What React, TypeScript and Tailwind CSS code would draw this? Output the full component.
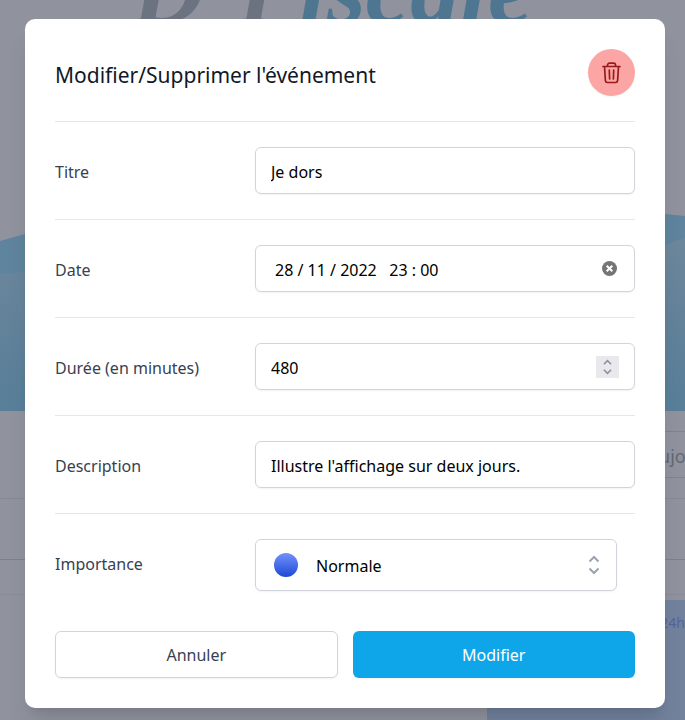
import React, { useState } from "react";

const field =
  "block h-[47px] w-full rounded-md border border-[#d1d5db] bg-white px-[15px] pt-[2px] text-[16px] text-black shadow-xs outline-none focus:border-sky-500";

function Row({ id, label, children }: { id: string; label: string; children: React.ReactNode }) {
  return (
    <div className="grid grid-cols-[200px_1fr] border-t border-[#e5e7eb] py-[25px]">
      <label htmlFor={id} className="self-start pt-[13px] text-[16px] leading-6 text-[#374151]">
        {label}
      </label>
      <div>{children}</div>
    </div>
  );
}

function Chevrons({ className }: { className: string }) {
  return (
    <svg className={className} viewBox="0 0 12 20" fill="none" stroke="currentColor" strokeWidth="2" aria-hidden="true">
      <path d="M1.5 6.5 6 2l4.5 4.5M1.5 13.5 6 18l4.5-4.5" />
    </svg>
  );
}

function Backdrop() {
  return (
    <div className="absolute inset-0 flex flex-col overflow-hidden bg-[#90939e]" aria-hidden="true">
      <div className="h-[212px] pr-5 text-center font-['Liberation_Serif',serif] text-[100px] font-bold italic leading-[1] text-[#6b7280]">
        <div className="-mt-[60px]">
          D’P<span className="text-[#4f7691]">iscale</span>
        </div>
      </div>
      <svg className="h-[199px] w-full shrink-0" viewBox="0 0 685 199" preserveAspectRatio="none">
        <defs>
          <linearGradient id="wave" x1="0" y1="0" x2="0" y2="1">
            <stop offset="0" stopColor="#6d879c" />
            <stop offset="0.9" stopColor="#5a7f99" />
          </linearGradient>
        </defs>
        <path d="M0 29 25 22C200-30 420-10 665 2L685 4V199H0Z" fill="#5f849d" />
        <path d="M0 62 25 60C250 42 450 120 665 33L685 26V199H0Z" fill="url(#wave)" />
      </svg>
      <div className="ml-[60px] h-[21px] shrink-0 border-b border-[#80838f]" />
      <div className="ml-[60px] flex h-[46px] shrink-0 items-center justify-end border-b border-[#80838f] pt-1 text-[18px] text-[#636875]">
        <span className="-mr-[60px]">Aujourd’hui</span>
      </div>
      <div className="h-[21px] shrink-0 border-b border-[#868994]" />
      <div className="h-[61px] shrink-0 border-b border-[#7e818c]" />
      <div className="h-[35px] shrink-0 border-b border-[#898c97]" />
      <div className="flex flex-1 justify-end">
        <div className="mt-[5px] w-[198px] bg-[#72829d] pt-3 text-right text-[14px] text-[#53659b]">24h</div>
      </div>
    </div>
  );
}

export default function App() {
  const [title, setTitle] = useState("Je dors");
  const [date, setDate] = useState("28 / 11 / 2022   23 : 00");
  const [duration, setDuration] = useState(480);
  const [description, setDescription] = useState("Illustre l'affichage sur deux jours.");

  return (
    <div className="relative min-h-screen overflow-hidden pt-[19px] pr-5 pb-3 pl-[25px] font-['Noto_Sans','Open_Sans',sans-serif]">
      <Backdrop />
      <form
        role="dialog"
        aria-labelledby="dialog-title"
        className="relative rounded-[10px] bg-white p-[30px] shadow-xl"
        onSubmit={(e) => e.preventDefault()}
      >
        <header className="mb-[25px] flex items-center justify-between">
          <h1 id="dialog-title" className="pt-1 text-[21px] leading-7 text-[#111827]">
            Modifier/Supprimer l'événement
          </h1>
          <button
            type="button"
            aria-label="Supprimer"
            className="flex size-[47px] items-center justify-center rounded-full bg-[#fca5a5] text-[#991b1b] shadow-xs"
          >
            <svg className="size-6" viewBox="0 0 24 24" fill="none" stroke="currentColor" strokeWidth="1.7" strokeLinecap="round" strokeLinejoin="round">
              <path d="M3 5.5h17M4.5 5.500l.9 14.200a2 2 0 0 0 2 1.800h8.200a2 2 0 0 0 2-1.800l.9-14.200M7.500 5.500V4.200a2 2 0 0 1 2-2h4a2 2 0 0 1 2 2v1.300M9.300 9l.3 9M13.700 9l-.3 9" />
            </svg>
          </button>
        </header>

        <Row id="title" label="Titre">
          <input id="title" className={field} value={title} onChange={(e) => setTitle(e.target.value)} />
        </Row>

        <Row id="date" label="Date">
          <div className="relative">
            <input id="date" className={`${field} pl-[19px]`} value={date} onChange={(e) => setDate(e.target.value)} />
            <button
              type="button"
              aria-label="Effacer la date"
              className="absolute top-4 right-[18px] size-[15px]"
              onClick={() => setDate("")}
            >
              <svg viewBox="0 0 15 15" className="size-[15px]">
                <circle cx="7.5" cy="7.5" r="7.5" fill="#757575" />
                <path d="m4.700 4.700 5.600 5.600m0-5.600-5.600 5.600" stroke="#fff" strokeWidth="2" />
              </svg>
            </button>
          </div>
        </Row>

        <Row id="duration" label="Durée (en minutes)">
          <div className="relative">
            <input
              id="duration"
              inputMode="numeric"
              className={field}
              value={duration}
              onChange={(e) => setDuration(Number(e.target.value) || 0)}
            />
            <div className="absolute top-[13px] right-4 h-[22px] w-[23px] bg-[#e9e9ed] text-[#8f8f9d]">
              <Chevrons className="absolute top-[3px] left-[6px] h-4 w-[11px]" />
              <button type="button" aria-label="Augmenter" className="relative block h-[11px] w-full" onClick={() => setDuration(duration + 1)} />
              <button type="button" aria-label="Diminuer" className="relative block h-[11px] w-full" onClick={() => setDuration(duration - 1)} />
            </div>
          </div>
        </Row>

        <Row id="description" label="Description">
          <input id="description" className={field} value={description} onChange={(e) => setDescription(e.target.value)} />
        </Row>

        <Row id="importance" label="Importance">
          <div className="relative mr-[18px]">
            <select
              id="importance"
              defaultValue="Normale"
              className="block h-[52px] w-full appearance-none rounded-md border border-[#d1d5db] bg-white pt-[2px] pl-[60px] text-[16px] text-black shadow-xs outline-none"
            >
              <option>Faible</option>
              <option>Normale</option>
              <option>Haute</option>
            </select>
            <span className="pointer-events-none absolute top-[14px] left-[19px] size-6 rounded-full bg-linear-to-b from-[#7391fa] to-[#1d46d6]" />
            <Chevrons className="pointer-events-none absolute top-4 right-[17px] h-5 w-3 text-[#9ca3af]" />
          </div>
        </Row>

        <div className="mt-[15px] grid grid-cols-2 gap-[15px]">
          <button type="button" className="h-[47px] rounded-md border border-[#d1d5db] bg-white text-[16px] text-[#374151] shadow-xs">
            Annuler
          </button>
          <button type="submit" className="h-[47px] rounded-md bg-[#0ea5e9] text-[16px] text-white shadow-xs">
            Modifier
          </button>
        </div>
      </form>
    </div>
  );
}
